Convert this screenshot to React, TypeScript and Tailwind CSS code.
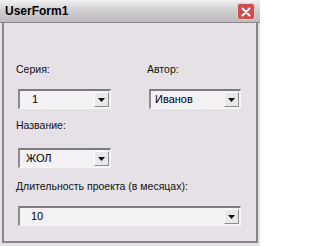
import { useState } from 'react';

interface ComboProps {
  value: string;
  width: string;
  pad: string;
}

function Combo({ value, width, pad }: ComboProps) {
  return (
    <div
      className={`${width} h-[20px] flex items-stretch bg-[#f3f1f4] border-t-2 border-l-2 border-t-[#7e7b80] border-l-[#8d8a8f] border-b border-r border-b-[#f7f6f8] border-r-[#f7f6f8]`}
    >
      <div className={`flex-1 flex items-center ${pad} text-[11px] leading-none text-black`}>{value}</div>
      <div className="w-[15px] my-[1px] mr-[1px] flex items-center justify-center bg-[#e9e7ea] border-l border-t border-[#fdfcfd] border-r border-b border-r-[#8e8b90] border-b-[#8e8b90]">
        <svg width="7" height="4" viewBox="0 0 7 4">
          <polygon points="0,0 7,0 3.5,4" fill="#111" />
        </svg>
      </div>
    </div>
  );
}

export default function App() {
  const [hover, setHover] = useState(false);

  return (
    <div
      className="w-[260px] h-[246px] bg-[#e6e1e7] flex flex-col overflow-hidden"
      style={{ fontFamily: '"Liberation Sans", "DejaVu Sans", sans-serif' }}
    >
      <div className="h-[23px] shrink-0 flex items-center justify-between pl-[5px] pr-[5px] bg-gradient-to-b from-[#f2f2f2] via-[#cfcdd0] to-[#bdbbbe] border-b border-[#8a878c]">
        <span className="text-[12px] font-bold text-black">UserForm1</span>
        <button
          onMouseEnter={() => setHover(true)}
          onMouseLeave={() => setHover(false)}
          className={`w-[18px] h-[17px] mt-[1px] flex items-center justify-center rounded-[3px] border border-[#f3c9c9] ${hover ? 'bg-[#e06060]' : 'bg-[#cf4d4f]'}`}
        >
          <svg width="10" height="10" viewBox="0 0 10 10">
            <path d="M1.5 1.5 L8.5 8.5 M8.5 1.5 L1.5 8.5" stroke="#fff" strokeWidth="2" strokeLinecap="round" />
          </svg>
        </button>
      </div>
      <div className="flex-1 mx-[2px] mb-[3px] border-l-2 border-r-2 border-b-2 border-[#8a878c] flex flex-col pl-[12px] text-[10.5px] text-[#111]">
        <div className="mt-[39px] grid grid-cols-[95px_94px] gap-x-[36px]">
          <div className="leading-[14px]">Серия:</div>
          <div className="leading-[14px]">Автор:</div>
          <div className="mt-[13px] pl-[2px]">
            <Combo value="1" width="w-[93px]" pad="pl-[12px]" />
          </div>
          <div className="mt-[13px] pl-[2px]">
            <Combo value="Иванов" width="w-[92px]" pad="pl-[4px]" />
          </div>
        </div>
        <div className="mt-[9px] leading-[14px]">Название:</div>
        <div className="mt-[16px] pl-[2px]">
          <Combo value="ЖОЛ" width="w-[93px]" pad="pl-[6px]" />
        </div>
        <div className="mt-[11px] leading-[14px]">Длительность проекта (в месяцах):</div>
        <div className="mt-[13px] pl-[2px]">
          <Combo value="10" width="w-[223px]" pad="pl-[11px]" />
        </div>
      </div>
    </div>
  );
}
